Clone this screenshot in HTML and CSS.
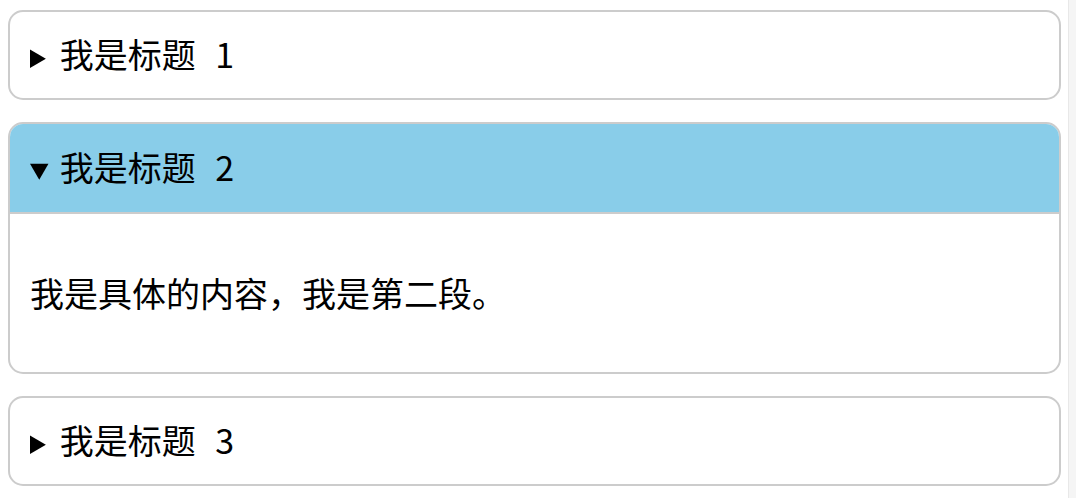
FILE: index.html
```html
<!DOCTYPE html>
<html lang="zh">
<head>
<meta charset="utf-8">
<title>details</title>
<link rel="stylesheet" href="styles.css">
</head>
<body>
<details class="panel">
  <summary class="panel-title">我是标题 1</summary>
  <div class="panel-body"><p>我是具体的内容，我是第一段。</p></div>
</details>
<details class="panel" open>
  <summary class="panel-title">我是标题 2</summary>
  <div class="panel-body"><p>我是具体的内容，我是第二段。</p></div>
</details>
<details class="panel">
  <summary class="panel-title">我是标题 3</summary>
  <div class="panel-body"><p>我是具体的内容，我是第三段。</p></div>
</details>
</body>
</html>
```
FILE: styles.css
```css
html {
  min-height: 100%;
  background: linear-gradient(to left, #f5f5f5 7px, #e8e8e8 7px, #e8e8e8 8px, #fff 8px);
}
body {
  margin: 10px 15px 8px 8px;
  font-family: "Noto Sans CJK SC", "Noto Sans", sans-serif;
  font-size: 34px;
  line-height: 46px;
  color: #000;
}
.panel {
  background: #fff;
  border: 2px solid #ccc;
  border-radius: 15px;
  margin-bottom: 22px;
  overflow: hidden;
}
.panel-title {
  padding: 20px;
  line-height: 44px;
  word-spacing: 12px;
  cursor: pointer;
}
.panel-title::marker {
  font-size: 28px;
}
.panel[open] .panel-title {
  padding: 21px 20px 21px;
  background: #89cde9;
  border-bottom: 2px solid #ccc;
}
.panel-body {
  padding: 20px;
}
.panel-body p {
  margin: 36px 0 36px;
}
```
